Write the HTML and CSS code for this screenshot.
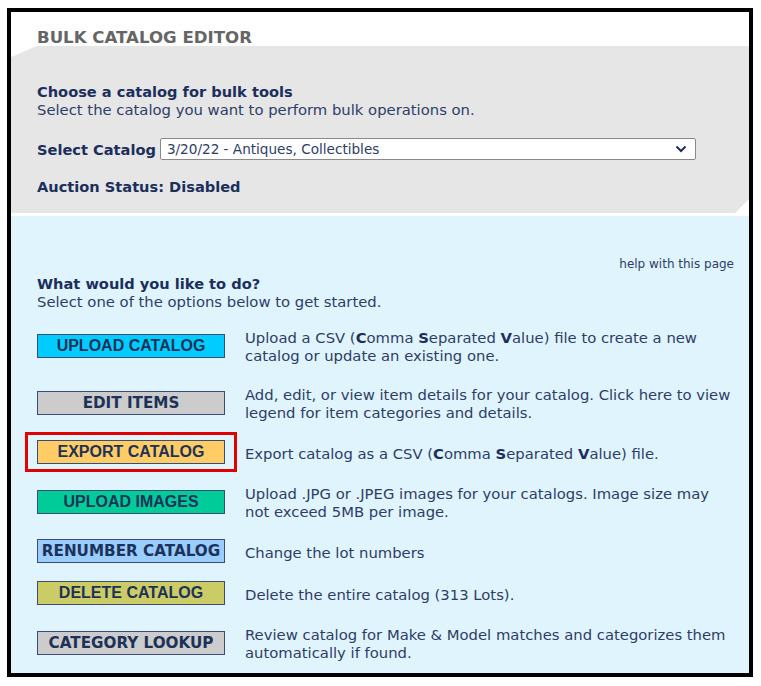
FILE: index.html
```html
<!DOCTYPE html>
<html>
<head>
<meta charset="utf-8">
<title>Bulk Catalog Editor</title>
<link rel="stylesheet" href="styles.css">
</head>
<body>
<div class="frame">
  <div class="title">BULK CATALOG EDITOR</div>
  <div class="panel-gray">
    <div class="heading">Choose a catalog for bulk tools</div>
    <div class="sub">Select the catalog you want to perform bulk operations on.</div>
    <div class="select-row">
      <span class="label">Select Catalog</span>
      <div class="select">
        <span>3/20/22 - Antiques, Collectibles</span>
        <svg class="chev" width="12" height="8" viewBox="0 0 12 8"><polyline points="1.5,1.5 6,6 10.5,1.5" fill="none" stroke="#1c2f5c" stroke-width="2"/></svg>
      </div>
    </div>
    <div class="status">Auction Status: Disabled</div>
  </div>
  <div class="panel-blue">
    <div class="help">help with this page</div>
    <div class="heading">What would you like to do?</div>
    <div class="sub">Select one of the options below to get started.</div>
    <div class="options">
      <div class="btn btn-arial c-cyan">UPLOAD CATALOG</div>
      <div class="desc">Upload a CSV (<b>C</b>omma <b>S</b>eparated <b>V</b>alue) file to create a new<br>catalog or update an existing one.</div>

      <div class="btn btn-verdana c-gray">EDIT ITEMS</div>
      <div class="desc">Add, edit, or view item details for your catalog. Click here to view<br>legend for item categories and details.</div>

      <div class="btn btn-arial c-orange highlighted">EXPORT CATALOG</div>
      <div class="desc">Export catalog as a CSV (<b>C</b>omma <b>S</b>eparated <b>V</b>alue) file.</div>

      <div class="btn btn-arial c-green">UPLOAD IMAGES</div>
      <div class="desc">Upload .JPG or .JPEG images for your catalogs. Image size may<br>not exceed 5MB per image.</div>

      <div class="btn btn-verdana c-lblue">RENUMBER CATALOG</div>
      <div class="desc">Change the lot numbers</div>

      <div class="btn btn-arial c-olive">DELETE CATALOG</div>
      <div class="desc">Delete the entire catalog (313 Lots).</div>

      <div class="btn btn-verdana c-gray">CATEGORY LOOKUP</div>
      <div class="desc">Review catalog for Make &amp; Model matches and categorizes them<br>automatically if found.</div>
    </div>
  </div>
</div>
</body>
</html>
```
FILE: styles.css
```css
html, body {
  margin: 0;
  padding: 0;
  background: #ffffff;
}
body {
  font-family: "DejaVu Sans", Verdana, sans-serif;
  color: #2e3d66;
}
.frame {
  margin: 8px 8px 0 7px;
  border: 4px solid #000;
  height: 661px;
  display: flex;
  flex-direction: column;
  box-sizing: content-box;
  overflow: hidden;
}
.title {
  flex-shrink: 0;
  height: 34px;
  box-sizing: border-box;
  padding: 16px 0 0 26px;
  font-size: 16.6px;
  line-height: 19px;
  font-weight: bold;
  color: #666666;
}
.panel-gray {
  flex-shrink: 0;
  height: 167px;
  box-sizing: border-box;
  background: #e6e6e6;
  padding: 37px 0 0 26px;
  clip-path: polygon(0 11px, 26px 0, 100% 0, 100% calc(100% - 14px), calc(100% - 14px) 100%, 0 100%);
}
.heading {
  font-size: 14.6px;
  line-height: 18px;
  font-weight: bold;
  color: #1c2f5c;
}
.sub {
  font-size: 14.8px;
  line-height: 18px;
  color: #2e3d66;
}
.select-row {
  margin-top: 19px;
  display: flex;
  align-items: center;
  gap: 4px;
}
.label {
  font-size: 14.6px;
  font-weight: bold;
  color: #1c2f5c;
}
.select {
  width: 536px;
  height: 22px;
  box-sizing: border-box;
  border: 1px solid #8a8a8a;
  border-radius: 2px;
  background: #fff;
  display: flex;
  align-items: center;
  justify-content: space-between;
  padding: 0 8px 0 6px;
  font-size: 13.6px;
  color: #2e3d66;
}
.status {
  margin-top: 18px;
  font-size: 14.6px;
  line-height: 18px;
  font-weight: bold;
  color: #1c2f5c;
}
.panel-blue {
  margin-top: 3px;
  flex: 1;
  min-height: 0;
  background: #e0f4fd;
  padding: 40px 15px 0 26px;
}
.help {
  text-align: right;
  font-size: 12px;
  line-height: 16px;
  color: #2e3d66;
  margin-bottom: 3px;
}
.options {
  margin-top: 15px;
  display: grid;
  grid-template-columns: 188px 1fr;
  column-gap: 20px;
  row-gap: 18px;
  align-items: center;
}
.btn {
  position: relative;
  height: 24px;
  box-sizing: border-box;
  border: 1px solid #3d4b78;
  display: flex;
  align-items: center;
  justify-content: center;
  font-weight: bold;
  color: #1d3258;
  white-space: nowrap;
}
.btn-arial {
  font-family: "Liberation Sans", Arial, sans-serif;
  font-size: 16px;
}
.btn-verdana {
  font-family: "DejaVu Sans", Verdana, sans-serif;
  font-size: 15.2px;
}
.c-cyan { background: #00ccff; }
.c-gray { background: #cccccc; }
.c-orange { background: #ffcc66; }
.c-green { background: #00cc99; }
.c-lblue { background: #99ccff; }
.c-olive { background: #cccc66; }
.highlighted::after {
  content: "";
  position: absolute;
  left: -13px;
  right: -13px;
  top: -9px;
  bottom: -9px;
  border: 3px solid #e00000;
}
.desc {
  font-size: 14.8px;
  line-height: 18px;
  color: #2e3d66;
  white-space: nowrap;
  padding-top: 3px;
}
.desc b {
  color: #1c2f5c;
}
```
